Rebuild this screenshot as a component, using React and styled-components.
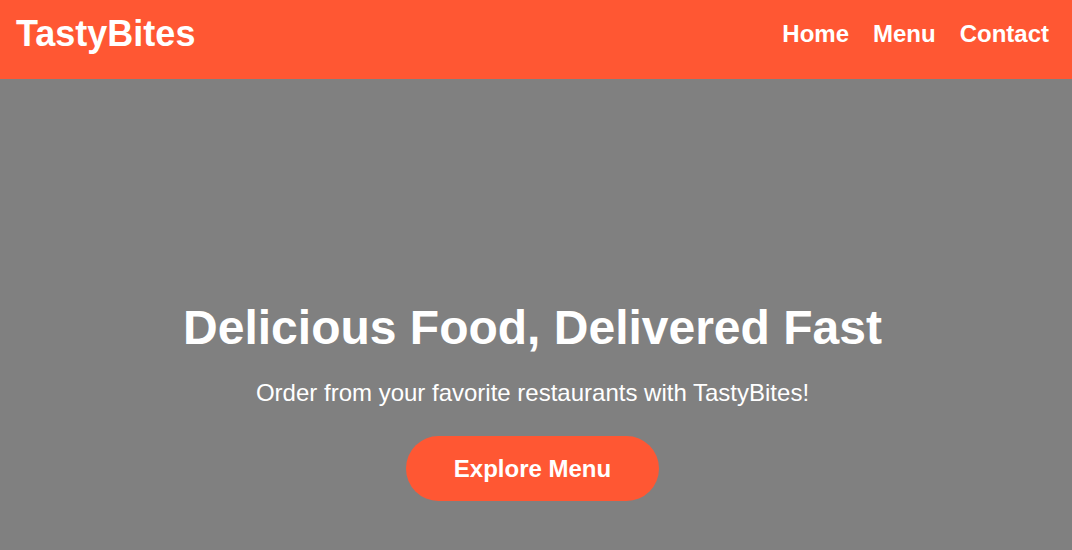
import React from "react";
import styled, { createGlobalStyle } from "styled-components";

const GlobalStyle = createGlobalStyle`
  html, body {
    margin: 0;
    padding: 0;
    height: 100%;
  }
  body {
    font-family: "Liberation Sans", Arial, sans-serif;
    background: #808080;
  }
  #root {
    min-height: 100%;
    display: flex;
    flex-direction: column;
  }
`;

const Header = styled.header`
  display: flex;
  justify-content: space-between;
  align-items: center;
  height: 79px;
  box-sizing: border-box;
  padding: 0 23px 11px 16px;
  background-color: #ff5733;
`;

const Logo = styled.h1`
  margin: 0;
  font-size: 36px;
  font-weight: 700;
  color: #ffffff;
`;

const Nav = styled.nav`
  display: flex;
  gap: 24px;
`;

const NavLink = styled.a`
  font-size: 24px;
  font-weight: 700;
  color: #ffffff;
  text-decoration: none;
`;

const Hero = styled.section`
  flex: 1;
  display: flex;
  flex-direction: column;
  align-items: center;
  padding: 221px 7px 40px 0;
  background-color: #808080;
  color: #ffffff;
  text-align: center;
`;

const Title = styled.h2`
  margin: 0 0 24px;
  font-size: 48px;
  font-weight: 700;
`;

const Subtitle = styled.p`
  margin: 0 0 29px;
  font-size: 24px;
`;

const CtaButton = styled.button`
  padding: 18.5px 48px;
  border: none;
  border-radius: 33px;
  background-color: #ff5733;
  color: #ffffff;
  font-family: "Liberation Sans", Arial, sans-serif;
  font-size: 24px;
  font-weight: 700;
  cursor: pointer;
`;

function App() {
  return (
    <>
      <GlobalStyle />
      <Header>
        <Logo>TastyBites</Logo>
        <Nav>
          <NavLink href="#">Home</NavLink>
          <NavLink href="#">Menu</NavLink>
          <NavLink href="#">Contact</NavLink>
        </Nav>
      </Header>
      <Hero>
        <Title>Delicious Food, Delivered Fast</Title>
        <Subtitle>Order from your favorite restaurants with TastyBites!</Subtitle>
        <CtaButton>Explore Menu</CtaButton>
      </Hero>
    </>
  );
}

export default App;
